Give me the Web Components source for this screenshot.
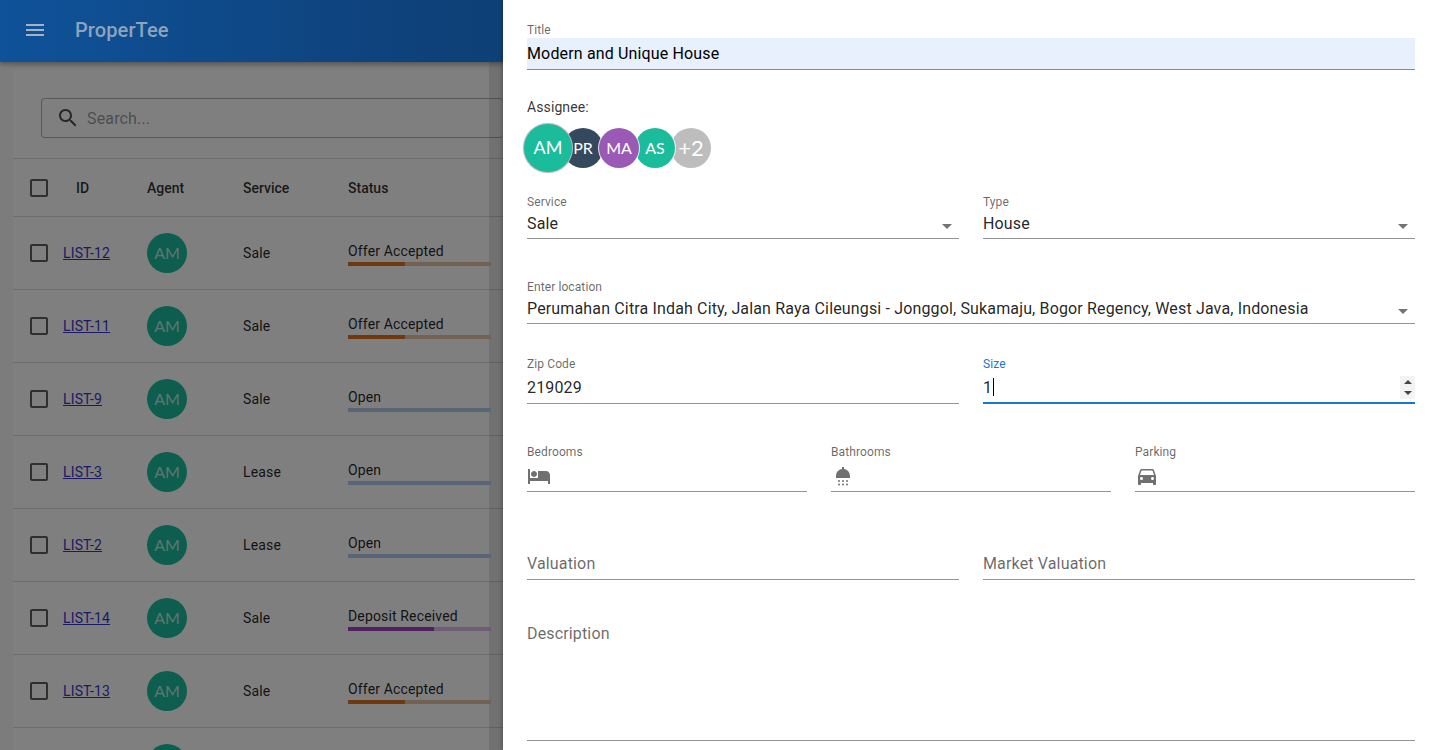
<!DOCTYPE html>
<html>
<head>
<meta charset="utf-8">
<title>ProperTee</title>
<style>
  html, body { margin: 0; height: 100%; overflow: hidden; }
  body { font-family: Roboto, "Liberation Sans", sans-serif; background: linear-gradient(90deg, #f8f8f8 0 489px, #e2e2e2 489px); }
</style>
</head>
<body>
<app-shell>
  <app-bar slot="bar" title-text="ProperTee"></app-bar>
  <listing-board slot="page">
    <listing-row code="LIST-12" service="Sale" status="Offer Accepted" bar="offer"></listing-row>
    <listing-row code="LIST-11" service="Sale" status="Offer Accepted" bar="offer"></listing-row>
    <listing-row code="LIST-9" service="Sale" status="Open" bar="open"></listing-row>
    <listing-row code="LIST-3" service="Lease" status="Open" bar="open"></listing-row>
    <listing-row code="LIST-2" service="Lease" status="Open" bar="open"></listing-row>
    <listing-row code="LIST-14" service="Sale" status="Deposit Received" bar="deposit"></listing-row>
    <listing-row code="LIST-13" service="Sale" status="Offer Accepted" bar="offer"></listing-row>
    <listing-row stub></listing-row>
  </listing-board>
  <listing-form slot="drawer"></listing-form>
</app-shell>

<script>
const ICONS = {
  bed: "M7 13c1.66 0 3-1.34 3-3S8.66 7 7 7s-3 1.34-3 3 1.34 3 3 3zm12-6h-8v7H3V5H1v15h2v-3h18v3h2v-9c0-2.21-1.79-4-4-4z",
  shower: "M9 17a1 1 0 1 1-2 0 1 1 0 0 1 2 0zm4 0a1 1 0 1 1-2 0 1 1 0 0 1 2 0zm4 0a1 1 0 1 1-2 0 1 1 0 0 1 2 0zM9 20.5a1 1 0 1 1-2 0 1 1 0 0 1 2 0zm4 0a1 1 0 1 1-2 0 1 1 0 0 1 2 0zm4 0a1 1 0 1 1-2 0 1 1 0 0 1 2 0zM19 14H5v-2c0-3.53 2.61-6.43 6-6.92V3h2v2.08c3.39.49 6 3.39 6 6.92v2z",
  car: "M18.92 6.01C18.72 5.42 18.16 5 17.5 5h-11c-.66 0-1.21.42-1.42 1.01L3 12v8c0 .55.45 1 1 1h1c.55 0 1-.45 1-1v-1h12v1c0 .55.45 1 1 1h1c.55 0 1-.45 1-1v-8l-2.08-5.99zM6.5 16c-.83 0-1.5-.67-1.5-1.5S5.67 13 6.5 13s1.5.67 1.5 1.5S7.33 16 6.5 16zm11 0c-.83 0-1.5-.67-1.5-1.5s.67-1.5 1.5-1.5 1.5.67 1.5 1.5-.67 1.5-1.5 1.5zM5 11l1.5-4.5h11L19 11H5z",
  menu: "M3 18h18v-2H3v2zm0-5h18v-2H3v2zm0-7v2h18V6H3z",
  search: "M15.5 14h-.79l-.28-.27C15.41 12.59 16 11.11 16 9.5 16 5.91 13.09 3 9.5 3S3 5.91 3 9.5 5.91 16 9.5 16c1.61 0 3.09-.59 4.23-1.57l.27.28v.79l5 4.99L20.49 19l-4.99-5zm-6 0C7.01 14 5 11.99 5 9.5S7.01 5 9.5 5 14 7.01 14 9.5 11.99 14 9.5 14z",
  box: "M19 5v14H5V5h14m0-2H5c-1.1 0-2 .9-2 2v14c0 1.1.9 2 2 2h14c1.1 0 2-.9 2-2V5c0-1.1-.9-2-2-2z"
};

function icon(name, size, color) {
  return `<svg width="${size}" height="${size}" viewBox="0 0 24 24" fill="${color}" style="display:block;flex:none"><path d="${ICONS[name]}"/></svg>`;
}

class AppShell extends HTMLElement {
  constructor() {
    super();
    this.attachShadow({ mode: "open" });
    this.shadowRoot.innerHTML = `
    <style>
      :host { display: block; position: relative; width: 1438px; height: 750px; overflow: hidden; }
      .dim { position: absolute; inset: 0; background: rgba(0,0,0,.5); }
      .drawer {
        position: absolute; top: 0; right: 0; bottom: 0; width: 935px; z-index: 2;
        background: #fff;
        box-shadow: -1px 0 4px rgba(0,0,0,.25);
      }
    </style>
    <slot name="bar"></slot>
    <slot name="page"></slot>
    <div class="dim"></div>
    <div class="drawer"><slot name="drawer"></slot></div>
    `;
  }
}

class AppBar extends HTMLElement {
  constructor() {
    super();
    this.attachShadow({ mode: "open" });
  }
  connectedCallback() {
    this.shadowRoot.innerHTML = `
    <style>
      :host {
        display: flex; align-items: center; height: 60px; padding: 0 0 2px 23px;
        background: linear-gradient(90deg, #0f5299 0%, #0e4179 30%, #0e3c70 100%);
        box-shadow: 0 2px 5px rgba(0,0,0,.35);
        position: relative; z-index: 1;
      }
      .title { margin-left: 28px; font-size: 20px; font-weight: 500; letter-spacing: .1px; color: #8ea3be; }
    </style>
    ${icon("menu", 24, "#a3b3c6")}
    <div class="title">${this.getAttribute("title-text")}</div>
    `;
  }
}

class ListingBoard extends HTMLElement {
  constructor() {
    super();
    this.attachShadow({ mode: "open" });
    this.shadowRoot.innerHTML = `
    <style>
      :host { display: block; margin: 6px 0 0 13px; width: 476px; background: #fff; border-radius: 6px; font-size: 14px; height: 800px; }
      .inner { width: 490px; padding-top: 30px; }
      .search {
        margin-left: 28px; height: 38px; border: 1px solid rgba(0,0,0,.3); border-radius: 4px;
        display: flex; align-items: center; padding-left: 14px; gap: 7px; border-right: 0;
        font-size: 16px; letter-spacing: .15px; color: rgba(0,0,0,.42);
      }
      .head {
        margin-top: 20px; height: 57px; display: grid; grid-template-columns: 50px 84px 96px 105px 1fr; align-items: center;
        border-top: 1px solid rgba(0,0,0,.14); border-bottom: 1px solid rgba(0,0,0,.14);
        font-size: 14px; font-weight: 500; color: rgba(0,0,0,.82);
      }
      .head svg { margin-left: 14px; }
      .head .id { padding-left: 13px; }
    </style>
    <div class="inner">
      <div class="search">${icon("search", 24, "#000000b0")}<span>Search...</span></div>
      <div class="head">
        ${icon("box", 24, "#000000a0")}
        <span class="id">ID</span><span>Agent</span><span>Service</span><span>Status</span>
      </div>
      <slot></slot>
    </div>
    `;
  }
}

class ListingRow extends HTMLElement {
  constructor() {
    super();
    this.attachShadow({ mode: "open" });
  }
  connectedCallback() {
    const stub = this.hasAttribute("stub");
    const bar = this.getAttribute("bar");
    this.shadowRoot.innerHTML = `
    <style>
      :host {
        display: grid; grid-template-columns: 50px 84px 96px 105px 143px; align-items: center;
        height: 72px; border-bottom: 1px solid rgba(0,0,0,.14);
        font-size: 14px; letter-spacing: .15px; color: rgba(0,0,0,.87);
      }
      svg { margin-left: 14px; }
      a { color: #3b35c9; text-decoration: underline; }
      .avatar {
        box-sizing: border-box; padding-bottom: 2px;
        width: 40px; height: 40px; border-radius: 50%; background: #1abc9c; color: rgba(255,255,255,.72);
        display: flex; align-items: center; justify-content: center; font: 16px Lato, sans-serif; letter-spacing: 0;
      }
      .stub { margin-top: 16px; align-self: start; grid-column: 3; }
      .status { padding-top: 2px; }
      .track { height: 4px; margin-top: 3px; background: var(--track); }
      .fill { height: 100%; background: var(--fill); width: var(--w); }
      .offer { --track: #e4c4a8; --fill: #e0701c; --w: 40%; }
      .open { --track: #b4cdf0; --fill: #b4cdf0; --w: 0; }
      .deposit { --track: #e0b8f0; --fill: #a040c0; --w: 60%; }
    </style>
    ${stub ? `<div class="avatar stub"></div>` : `
    ${icon("box", 24, "#000000a0")}
    <span><a href="#">${this.getAttribute("code")}</a></span>
    <div class="avatar">AM</div>
    <span>${this.getAttribute("service")}</span>
    <div class="status">
      <div>${this.getAttribute("status")}</div>
      <div class="track ${bar}"><div class="fill"></div></div>
    </div>`}
    `;
  }
}

class FormField extends HTMLElement {
  constructor() {
    super();
    this.attachShadow({ mode: "open" });
  }
  connectedCallback() {
    const label = this.getAttribute("label");
    const h = this.getAttribute("control-height") || 29;
    this.shadowRoot.innerHTML = `
    <style>
      :host { display: block; min-width: 0; }
      .label { font-size: 12px; letter-spacing: .1px; line-height: 16px; height: 16px; padding-top: 1px; color: rgba(0,0,0,.6); }
      :host([focused]) .label { color: #1976d2; }
      .control {
        height: ${h}px; box-sizing: border-box; display: flex; align-items: center; position: relative;
        border-bottom: 1px solid rgba(0,0,0,.42);
        font-size: 16px; letter-spacing: .15px; color: rgba(0,0,0,.87);
      }
      :host([select]) .control { padding-bottom: 2px; }
      :host([focused]) .control { border-bottom: 2px solid #1976d2; }
      :host([filled]) .control { background: #e8f0fe; }
      :host([top]) .control { align-items: flex-start; padding-top: 7px; }
      :host([placeholder]) .control { color: rgba(0,0,0,.6); }
      .arrow { margin-left: auto; margin-right: 7px; margin-top: 7px; width: 0; height: 0; border: 5px solid transparent; border-top-color: rgba(0,0,0,.55); border-bottom: 0; flex: none; }
      :host(:not([select])) .arrow { display: none; }
    </style>
    ${label ? `<div class="label">${label}</div>` : ""}
    <div class="control"><slot></slot><div class="arrow"></div></div>
    `;
  }
}

class AvatarStack extends HTMLElement {
  constructor() {
    super();
    this.attachShadow({ mode: "open" });
    const people = [["PR", "#34495e", 2], ["MA", "#9b59b6", 4], ["AS", "#1abc9c", 3], ["+2", "#bdbdbd", 1]];
    this.shadowRoot.innerHTML = `
    <style>
      :host { display: flex; align-items: center; height: 48px; margin-left: -3px; font-family: Lato, sans-serif; color: #fff; }
      .a {
        box-sizing: border-box; padding-bottom: 2px;
        width: 40px; height: 40px; border-radius: 50%; display: flex; align-items: center; justify-content: center;
        font-size: 16px; flex: none; margin-left: -4px; position: relative; box-shadow: 0 0 0 1px rgba(255,255,255,.85);
      }
      .a:last-child { font-size: 22px; box-shadow: none; }
      .first { width: 48px; height: 48px; font-size: 18px; background: #1abc9c; margin: 0 -5px 0 0; z-index: 9; box-shadow: 0 0 0 1px #bbb, 0 0 2px #888; }
    </style>
    <div class="a first">AM</div>
    ${people.map(p => `<div class="a" style="background:${p[1]};z-index:${p[2]}">${p[0]}</div>`).join("")}
    `;
  }
}

class ListingForm extends HTMLElement {
  constructor() {
    super();
    this.attachShadow({ mode: "open" });
    const muted = "#0000008f";
    this.shadowRoot.innerHTML = `
    <style>
      :host { display: block; padding: 21px 23px 0 24px; font-size: 14px; }
      .two { display: grid; grid-template-columns: 432px 432px; gap: 24px; }
      .three { display: grid; grid-template-columns: repeat(3, 280px); gap: 24px; }
      .assignee { margin-top: 29px; font-size: 14px; letter-spacing: .1px; line-height: 16px; color: rgba(0,0,0,.8); margin-bottom: 9px; }
      .m21 { margin-top: 21px; } .m39 { margin-top: 39px; } .m31 { margin-top: 31px; } .m56 { margin-top: 56px; } .m37 { margin-top: 37px; }
      .caret { display: inline-block; width: 1px; height: 18px; background: #000; vertical-align: -3px; margin-left: 1px; }
      .spin {
        position: absolute; right: 0; top: 4px; width: 15px; height: 23px; background: #f3f3f3;
        display: flex; flex-direction: column; align-items: center; justify-content: center; gap: 7px;
      }
      .spin i { width: 0; height: 0; border: 4px solid transparent; }
      .spin i:first-child { border-top: 0; border-bottom: 4px solid #444; }
      .spin i:last-child { border-bottom: 0; border-top: 4px solid #444; }
      .title { color: #000; }
    </style>
    <form-field label="Title" filled control-height="32"><span class="title">Modern and Unique House</span></form-field>
    <div class="assignee">Assignee:</div>
    <avatar-stack></avatar-stack>
    <div class="two m21">
      <form-field label="Service" select>Sale</form-field>
      <form-field label="Type" select>House</form-field>
    </div>
    <form-field class="m39" label="Enter location" select>Perumahan Citra Indah City, Jalan Raya Cileungsi - Jonggol, Sukamaju, Bogor Regency, West Java, Indonesia</form-field>
    <div class="two m31">
      <form-field label="Zip Code" control-height="32">219029</form-field>
      <form-field label="Size" focused control-height="32">1<span class="caret"></span><span class="spin"><i></i><i></i></span></form-field>
    </div>
    <div class="three m39">
      <form-field label="Bedrooms" control-height="32">${icon("bed", 24, muted)}</form-field>
      <form-field label="Bathrooms" control-height="32">${icon("shower", 24, muted)}</form-field>
      <form-field label="Parking" control-height="32">${icon("car", 24, muted)}</form-field>
    </div>
    <div class="two m56">
      <form-field placeholder control-height="32">Valuation</form-field>
      <form-field placeholder control-height="32">Market Valuation</form-field>
    </div>
    <form-field class="m37" placeholder top control-height="124">Description</form-field>
    `;
  }
}

customElements.define("app-shell", AppShell);
customElements.define("app-bar", AppBar);
customElements.define("listing-board", ListingBoard);
customElements.define("listing-row", ListingRow);
customElements.define("form-field", FormField);
customElements.define("avatar-stack", AvatarStack);
customElements.define("listing-form", ListingForm);
</script>
</body>
</html>
